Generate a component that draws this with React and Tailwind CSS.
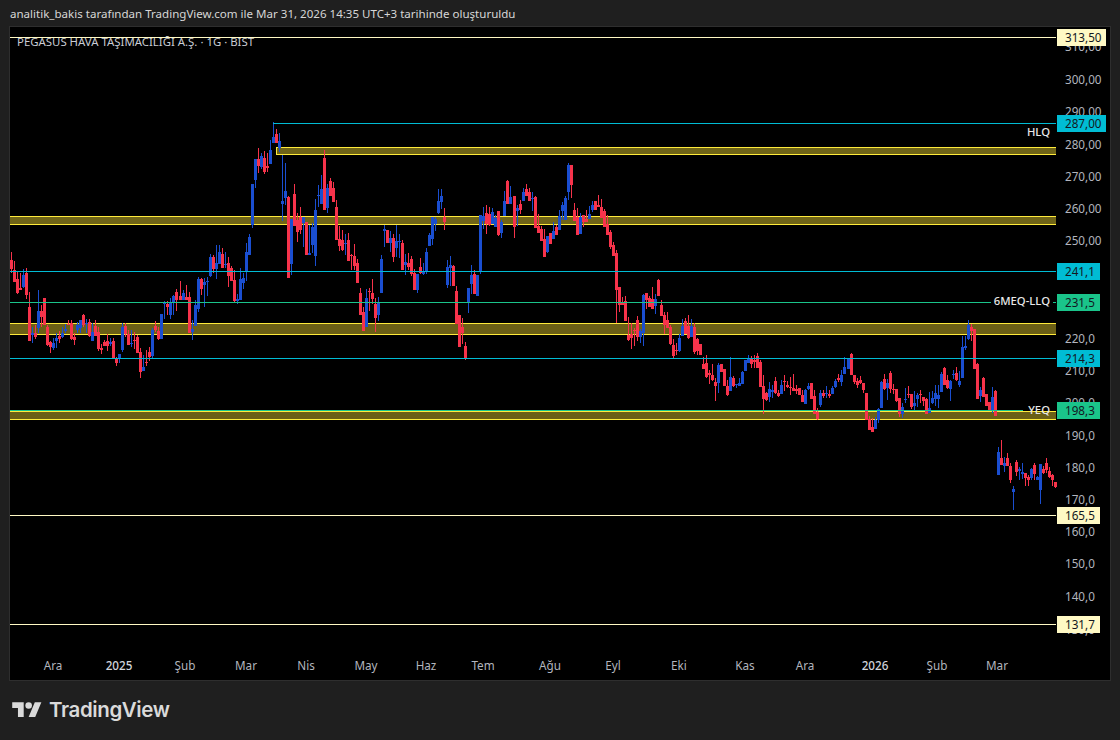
const RED = "#f7334b";
const BLUE = "#1a4ed0";

// body top, body bottom, wick top, wick bottom, read off 3x crops: [origin y, data]
const CHUNKS = [
  [240, "r60 88 36 98,r90 125 62 125,r118 158 95 162,r145 150 100 150,b105 142 88 145,r98 165 84 178,r201 303 155 303,b278 284 262 308,r280 290 255 296,b213 265 150 278,r213 232 195 260,r175 255 175 255,r261 316 255 318,r306 320 302 338,b308 324 295 330,b294 303 280 324,r288 297 274 310,b280 292 262 295,b267 272 252 280,r252 256 240 256,r250 297 240 300,r291 300 280 315,b256 270 246 280,b240 265 240 280,r225 255 222 262,b250 252 238 280,r246 288 238 290,b276 303 250 303,r257 288 240 288,r276 328 260 332,r324 330 312 342,r306 317 300 318,r304 318 282 332,b306 312 295 318,r303 357 295 358,r357 369 352 378,b343 357 343 370,b261 330 250 336,r258 282 248 290,r282 315 270 315,b308 311 270 320,r300 302 275 328,r292 339 285 340,r336 396 325 414,b381 393 345 393,r366 369 330 378,r336 351 320 363,b270 348 264 358,r258 270 243 275,r273 297 262 300,b222 297 222 297,b190 192 183 237,r192 201 183 225,b188 225 175 237,b168 189 165 225,r156 180 148 213,r168 180 123 180,b159 180 150 180,r171 180 135 180,r171 279 155 279,b267 276 240 300,b195 258 180 258,b117 207 111 216,r117 147 114 165,b126 135 115 200,b123 126 110 168,b51 108 42 110,r51 87 45 98,b69 87 15 117,b36 72 15 72,r42 84 24 84,b72 75 36 84,r69 108 51 140"],
  [110, "r475 513 468 513,r510 572 480 575,b567 573 552 582,b507 570 475 570,b505 518 488 537,b427 483 400 513,b381 435 372 435,b222 345 222 353,b147 210 147 234,r147 168 114 190,b138 170 128 177,r144 186 123 192,r168 174 128 186,b120 162 90 162,b81 99 36 99,r72 99 57 99,b93 114 70 125,b273 282 135 333,b243 264 160 285,r261 504 258 504,b327 462 327 495,r252 348 222 348,r330 366 310 396,r321 360 291 372,b321 340 321 411,r336 435 336 435,b430 435 345 435,b351 405 340 430,b300 438 267 468,b255 258 225 290,b237 282 195 282,r144 300 120 300,b234 294 222 309,r213 258 204 258,r234 276 216 276,r291 390 270 390,r387 408 348 423,r390 420 360 423,b399 402 372 435,r390 453 369 453,r435 438 432 480,r438 468 402 480,r459 519 447 519,r549 615 534 615,r606 663 590 663,b564 652 537 652,r543 546 534 603,r549 567 507 582,r582 624 564 666,b576 615 561 633,b447 549 435 549,b357 363 345 411,r360 399 360 399,b384 399 363 426,r384 441 372 456,b393 414 345 441,b393 396 372 444,r399 480 390 480,b456 465 432 495,r459 471 429 480,r447 492 438 498,r489 540 477 540,b492 540 492 549,r471 489 444 492,b483 492 460 495,b426 483 414 492,b375 408 369 408,b322 387 322 405,b327 342 322 363,b273 309 237 312,b258 276 237 297,r321 336 294 360,b471 525 450 534,b465 475 438 528,r468 528 465 528,r543 642 528 642,r615 711 615 711,r651 669 624 702,r708 744 696 750,b534 576 534 609,b495 522 465 552,r492 552 480 552,b495 558 495 558"],
  [150, "b195 365 195 372,b198 213 170 237,r189 222 165 252,r192 225 170 228,b186 222 175 222,b204 231 195 231,r183 255 183 258,b216 249 210 264,b153 198 123 198,r93 162 90 162,b141 162 108 162,r138 231 138 264,b174 183 165 228,r162 180 150 192,b126 153 114 153,r117 138 102 138,r126 153 114 153,b144 147 126 183,r141 234 138 234,r228 249 192 249,r237 273 228 273,r267 321 237 321,b258 306 258 309,r249 282 249 282,b243 267 216 267,r231 255 225 255,b198 240 180 240,b165 183 156 210,b144 210 138 210,b45 126 39 150,r45 105 45 144,r180 213 159 213,r201 255 174 255,b201 252 189 252,r195 216 195 231,r207 216 180 216,b192 207 168 207,b165 180 153 186,r153 180 153 180,r165 171 135 171,r171 204 147 204,r183 231 177 231,r222 255 195 255,r246 291 240 297,r285 318 276 318,r309 420 300 519,r411 465 411 486,r456 465 441 465,r453 513 438 513,r555 570 501 573,r552 564 519 597,r540 543 534 588,r510 561 498 573,b543 561 537 579,b435 549 432 588,r429 450 429 477,r444 471 438 471,r447 477 411 477,b447 468 432 492,r390 438 387 438,r465 498 450 498,r495 525 486 552,r510 534 486 534,r531 583 525 585,r585 618 567 624,r600 603 579 615,b564 603 552 606,b528 558 507 558,r513 552 504 552,r528 564 495 567,b528 561 507 561,r531 606 519 612,r567 603 564 615"],
  [310, "r102 135 102 135,r162 177 141 177,r159 201 135 204,r189 195 180 222,r195 210 162 213,r216 228 204 273,b165 219 159 249,r162 186 162 186,r177 228 177 228,r228 255 210 258,b201 243 141 243,r204 228 198 231,b222 225 222 234,b219 228 204 228,b186 222 183 222,b150 183 150 183,b147 159 135 159,r147 162 138 174,r150 156 135 174,r138 174 129 174,r156 231 150 231,r228 267 195 312,r249 270 246 273,b237 261 216 276,b240 246 225 264,r213 249 201 252,r249 258 240 261,b225 252 210 252,r213 216 195 243,r225 231 213 234,r231 234 201 255,r234 243 192 243,r237 243 225 252,r234 255 234 255,r255 276 240 276,b240 282 237 282,b228 237 219 240,r219 267 219 267,r258 312 240 312,r306 327 294 330,b249 285 240 291,r249 258 240 264,b249 252 228 264,r252 258 240 264,b234 252 228 252,b213 231 207 234,r204 210 192 216,b195 216 180 228,b171 192 141 192,b144 177 144 177,r132 195 129 195,r195 216 195 222,r213 225 204 234,r210 219 198 222,r219 240 219 249,r249 330 249 330,r327 360 318 360,r351 366 324 366,b330 357 321 357,b297 330 294 339,b216 294 213 294,r207 237 192 240,b219 234 207 270,r189 237 183 249,r237 240 222 252,r237 273 237 276,r264 312 264 321,b291 312 279 324,b267 270 234 279,r252 255 228 264,r252 291 252 297,b279 288 243 303,b255 267 249 291,r252 255 240 279,r261 273 261 288,r267 312 264 312,b294 309 246 309,b264 279 243 282,b249 267 225 288,b255 267 225 294,b192 246 186 246,r174 225 171 225,r210 234 195 237,b213 237 210 273,b192 195 180 207,r189 210 171 213,b213 225 183 231,b111 204 78 204,b108 114 78 120,b45 87 30 90,r51 63 42 93,r57 177 57 177,r162 267 159 267,b240 258 231 276,r204 261 201 261,r252 288 252 288,r276 300 276 300,b261 300 231 309,r243 318 240 318"],
  [430, "b66 135 51 135,r84 105 30 105,b99 108 81 126,r84 108 69 108,r108 150 99 159,b177 186 168 240,r96 126 90 138,b117 123 111 150,b126 132 99 147,r129 144 129 168,r141 150 135 168,b117 144 114 150,r105 132 99 150,b141 150 138 150,b102 180 102 222,r117 129 108 132,r99 120 84 129,r123 141 111 144,r135 150 132 168,r156 171 156 174"],
];

const candles = CHUNKS.flatMap(([oy, s]) =>
  s.split(",").map((c) => {
    const [t, b, h, l] = c.slice(1).split(" ").map(Number);
    return { up: c[0] === "b", t: oy + t / 3, b: oy + b / 3, h: oy + h / 3, l: oy + l / 3 };
  })
).map((c, i) => ({ ...c, x: Math.round(10 + 3.009 * i) }));

const ZONES = [
  { x: 276, y: 147, y2: 154, fill: "#6f6418" },
  { x: 10, y: 216, y2: 224, fill: "#6f6418" },
  { x: 10, y: 323, y2: 334, fill: "#6b5f16" },
  { x: 10, y: 411, y2: 419, fill: "#6b5f16" },
];

const LINES = [
  { x1: 10, x2: 1056, y: 37, c: "#fff9c4" },
  { x1: 273, x2: 1056, y: 123, c: "#00bcd4" },
  { x1: 10, x2: 1056, y: 271, c: "#00bcd4" },
  { x1: 10, x2: 991, y: 302, c: "#1ac48a" },
  { x1: 1053, x2: 1056, y: 302, c: "#1ac48a" },
  { x1: 10, x2: 1056, y: 358, c: "#00bcd4" },
  { x1: 10, x2: 1023, y: 410, c: "#1ac48a" },
  { x1: 10, x2: 1056, y: 515, c: "#fff9c4" },
  { x1: 10, x2: 1056, y: 624, c: "#fff9c4" },
];

const PRICES = [
  ["310,00", 46], ["300,00", 78.5], ["290,00", 111], ["280,00", 143.5], ["270,00", 175.5],
  ["260,00", 208], ["250,00", 240], ["220,0", 337.5], ["210,0", 369.5], ["200,0", 402],
  ["190,0", 434.5], ["180,0", 466.5], ["170,0", 498.5], ["160,0", 531], ["150,0", 563],
  ["140,0", 595.5], ["130,0", 629],
];

const TAGS = [
  { text: "313,50", y: 37, w: "w-[49px]", bg: "bg-[#fff9c4]" },
  { text: "287,00", y: 123, w: "w-[49px]", bg: "bg-[#00bcd4]" },
  { text: "241,1", y: 271, w: "w-[43px]", bg: "bg-[#00bcd4]" },
  { text: "231,5", y: 302, w: "w-[43px]", bg: "bg-[#1ac48a]" },
  { text: "214,3", y: 358, w: "w-[43px]", bg: "bg-[#00bcd4]" },
  { text: "198,3", y: 410, w: "w-[43px]", bg: "bg-[#1ac48a]" },
  { text: "165,5", y: 515, w: "w-[43px]", bg: "bg-[#fff9c4]" },
  { text: "131,7", y: 624, w: "w-[43px]", bg: "bg-[#fff9c4]" },
];

const MONTHS = [
  ["Ara", 53], ["2025", 119, true], ["Şub", 185], ["Mar", 246], ["Nis", 306], ["May", 366],
  ["Haz", 426], ["Tem", 483], ["Ağu", 550], ["Eyl", 613], ["Eki", 679], ["Kas", 745],
  ["Ara", 805], ["2026", 875, true], ["Şub", 937], ["Mar", 997],
];

const NOTES = [
  { text: "HLQ", y: 132 },
  { text: "6MEQ-LLQ", y: 301 },
  { text: "YEQ", y: 409.5 },
];

function Chart() {
  return (
    <svg
      className="block h-[623px] w-[1047px]"
      viewBox="10 27 1047 623"
      shapeRendering="crispEdges"
    >
      {ZONES.map((z) => (
        <g key={z.y}>
          <rect x={z.x} y={z.y} width={1056 - z.x} height={z.y2 - z.y + 1} fill={z.fill} />
          <rect x={z.x} y={z.y} width={1056 - z.x} height="1" fill="#ffeb3b" />
          <rect x={z.x} y={z.y2} width={1056 - z.x} height="1" fill="#ffeb3b" />
          {z.x > 10 && <rect x={z.x} y={z.y} width="1" height={z.y2 - z.y + 1} fill="#ffeb3b" />}
        </g>
      ))}
      {candles.map((c, i) => (
        <g key={i} fill={c.up ? BLUE : RED}>
          <rect x={c.x + 1} y={c.h} width="1" height={Math.max(c.l - c.h, 1)} />
          <rect x={c.x} y={c.t} width="3" height={Math.max(c.b - c.t, 1)} />
        </g>
      ))}
      {LINES.map((l) => (
        <rect key={`${l.y}-${l.x1}`} x={l.x1} y={l.y} width={l.x2 - l.x1} height="1" fill={l.c} />
      ))}
    </svg>
  );
}

function PriceScale() {
  return (
    <div className="relative h-[623px] w-[53px] overflow-hidden text-[11.7px] leading-[16px] text-[#b2b5be]">
      {PRICES.map(([p, y]) => (
        <span key={p} className="absolute left-[8px]" style={{ top: y - 27 - 8 }}>
          {p}
        </span>
      ))}
      {TAGS.map((t) => (
        <div
          key={t.text}
          className={`absolute left-0 flex h-[17px] items-center pb-[2px] pl-[8px] text-[#131722] ${t.w} ${t.bg}`}
          style={{ top: t.y - 27 - 8 }}
        >
          {t.text}
        </div>
      ))}
    </div>
  );
}

export default function App() {
  return (
    <div className="flex h-[740px] w-[1120px] flex-col overflow-hidden bg-[#1f1f1f] font-['Noto_Sans',sans-serif]">
      <div className="flex h-[26px] items-center pl-[10px] pt-[2px] text-[11.55px] text-[#d6d6d6]">
        analitik_bakis tarafından TradingView.com ile Mar 31, 2026 14:35 UTC+3 tarihinde oluşturuldu
      </div>

      <div className="ml-[9px] w-[1102px] border border-[#2e2e2e] bg-black">
        <div className="relative flex">
          <Chart />
          <PriceScale />
          <div className="absolute left-[7px] top-[7px] text-[11.4px] leading-[16px] text-[#c9ccd4]">
            PEGASUS HAVA TAŞIMACILIĞI A.Ş. · 1G · BIST
          </div>
          {NOTES.map((n) => (
            <span
              key={n.text}
              className="absolute right-[60px] text-[11.3px] font-medium leading-[16px] text-[#e8e8e8]"
              style={{ top: n.y - 27 - 8 }}
            >
              {n.text}
            </span>
          ))}
        </div>
        <div className="relative h-[30px] text-[11.7px] text-[#b2b5be]">
          {MONTHS.map(([m, x, year]) => (
            <span
              key={`${m}-${x}`}
              className={`absolute top-[6.5px] -translate-x-1/2 leading-[16px] ${year ? "font-medium text-[#d1d4dc]" : ""}`}
              style={{ left: x - 10 }}
            >
              {m}
            </span>
          ))}
        </div>
      </div>

      <div className="flex flex-1 items-center pl-[12px] text-[#dadada]">
        <svg width="30" height="23" viewBox="0 0 36 28" fill="currentColor">
          <path d="M14 22H7V11H0V4h14v18zM28 22h-8l7.5-18h8L28 22z" />
          <circle cx="20" cy="8" r="4" />
        </svg>
        <span className="ml-[7px] font-['Inter',sans-serif] text-[20.5px] font-semibold leading-none tracking-[-0.4px]">
          TradingView
        </span>
      </div>
    </div>
  );
}
